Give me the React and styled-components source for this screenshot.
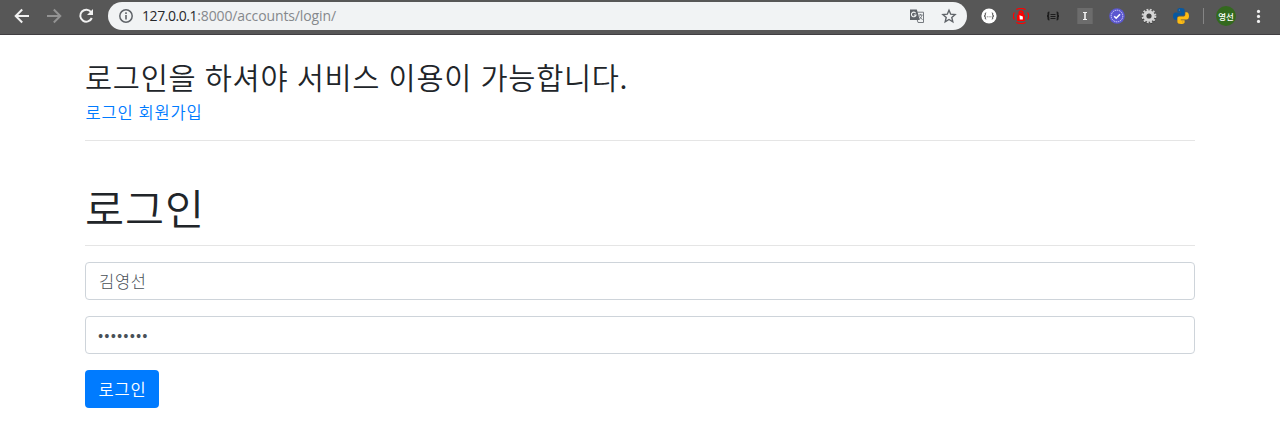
import React from 'react';
import styled, { createGlobalStyle } from 'styled-components';

const GlobalStyle = createGlobalStyle`
  *, *::before, *::after { box-sizing: border-box; }
  body {
    margin: 0;
    background: #fff;
    color: #212529;
    font-family: "Noto Sans CJK KR", sans-serif;
    font-weight: 350;
    font-size: 16.5px;
    line-height: 24px;
    overflow: hidden;
  }
`;

const Toolbar = styled.header`
  display: flex;
  align-items: center;
  height: 35px;
  padding: 0 9px 3px 12px;
  background: #575757;
  border-bottom: 1px solid #403e41;
`;

const NavButtons = styled.nav`
  display: flex;
  gap: 12px;
  margin-right: 12px;
`;

const Icon = styled.svg`
  display: block;
  flex: none;
  width: ${(p) => p.$size || 20}px;
  height: ${(p) => p.$size || 20}px;
`;

const AddressBar = styled.div`
  display: flex;
  align-items: center;
  width: 859px;
  height: 28px;
  padding: 0 10px;
  border-radius: 14px;
  background: #f1f3f4;
`;

const Url = styled.span`
  flex: 1;
  margin-left: 8px;
  font: 400 14px/20px "Open Sans", sans-serif;
  letter-spacing: -0.12px;
  color: #85888c;
`;

const Host = styled.span`
  color: #26282b;
  letter-spacing: -0.43px;
`;

const BarActions = styled.div`
  display: flex;
  gap: 16px;
`;

const Extensions = styled.div`
  display: flex;
  align-items: center;
  gap: 16px;
  margin-left: 14px;
`;

const Separator = styled.span`
  width: 1px;
  height: 16px;
  margin-left: 14px;
  background: #858585;
`;

const Avatar = styled.span`
  display: flex;
  align-items: center;
  justify-content: center;
  width: 20px;
  height: 20px;
  margin: 0 14px 0 12px;
  border-radius: 50%;
  background: #33691e;
  color: #fff;
  font-size: 8.5px;
  font-weight: 500;
  line-height: 10px;
`;

const Container = styled.main`
  width: 1110px;
  margin: 0 auto;
  padding-top: 24px;
`;

const Notice = styled.h3`
  margin: 0 0 7px;
  font-size: 29.5px;
  font-weight: 350;
  line-height: 34px;
  letter-spacing: 0.68px;
  word-spacing: 1.2px;
`;

const Links = styled.div`
  padding-left: 0.5px;
  letter-spacing: 0.8px;
  word-spacing: 0.5px;
`;

const Link = styled.a`
  color: #007bff;
  text-decoration: none;
`;

const Rule = styled.hr`
  height: 1px;
  margin: 16px 0 16px;
  border: 0;
  background: #e5e5e5;
`;

const Title = styled.h1`
  margin: 44px 0 0;
  font-size: 42.5px;
  font-weight: 350;
  line-height: 44px;
  letter-spacing: 0.9px;
`;

const Field = styled.input`
  display: block;
  width: 100%;
  height: 38px;
  margin-bottom: 16px;
  padding: ${(p) => (p.type === 'password' ? '5px 12px 7px' : '6px 13px')};
  border: 1px solid #ced4da;
  border-radius: 4px;
  background: #fff;
  color: #495057;
  font: inherit;
  font-weight: 300;
  letter-spacing: ${(p) => p.$spacing};
  outline: 0;
`;

const Submit = styled.button`
  display: block;
  width: 74px;
  height: 38px;
  padding: 0 0 0 1px;
  border: 0;
  border-radius: 4px;
  background: #007bff;
  color: #fff;
  font: inherit;
  letter-spacing: 0.75px;
`;

const BackIcon = () => (
  <Icon viewBox="0 0 20 20" fill="none" stroke="#f1f1f1" strokeWidth="2">
    <path d="M17 10H4M10.2 3.5 3.7 10l6.5 6.5" />
  </Icon>
);

const ForwardIcon = () => (
  <Icon viewBox="0 0 20 20" fill="none" stroke="#939393" strokeWidth="2">
    <path d="M3 10h13M9.8 3.5l6.5 6.5-6.5 6.5" />
  </Icon>
);

const ReloadIcon = () => (
  <Icon viewBox="0 0 20 20" fill="none" stroke="#f1f1f1" strokeWidth="2">
    <path d="M15.2 6.2A6 6 0 1 0 15.8 12" />
    <path d="M17 3v6h-6z" fill="#f1f1f1" stroke="none" />
  </Icon>
);

const InfoIcon = () => (
  <Icon $size={16} viewBox="0 0 16 16">
    <circle cx="8" cy="8" r="6.2" fill="none" stroke="#5f6368" strokeWidth="1.5" />
    <path d="M7.2 7h1.6v4.5H7.2zM7.2 4.3h1.6v1.6H7.2z" fill="#5f6368" />
  </Icon>
);

const TranslateIcon = () => (
  <Icon $size={16} viewBox="0 0 16 16">
    <path d="M6 4.2h8.5v10.3H9z" fill="#f1f3f4" stroke="#777b80" />
    <path d="M1 1.5h6.8l3 10.5H1z" fill="#5f6368" />
    <path d="M6.7 5.2A2.3 2.3 0 1 0 7 7H4.8" fill="none" stroke="#f1f3f4" strokeWidth="1.1" />
    <path d="M9.5 7h4M11.5 6v1M13 7c-.4 2-1.5 3-2.5 4M10.5 8.5l3 3.3" fill="none" stroke="#777b80" />
  </Icon>
);

const StarIcon = () => (
  <Icon $size={16} viewBox="0 0 16 16" fill="none" stroke="#5f6368" strokeWidth="1.4">
    <path d="M8 2.2l1.7 4 4.4.4-3.3 2.9 1 4.3L8 11.5l-3.800 2.300 1-4.300-3.300-2.900 4.400-.4z" />
  </Icon>
);

const BracesBadgeIcon = () => (
  <Icon $size={16} viewBox="0 0 16 16">
    <circle cx="8" cy="8" r="7.6" fill="#fff" />
    <path d="M5.2 4.8c-1.3 0-.8 1.2-.9 2.2 0 .6-.4 1-1 1 .6 0 1 .4 1 1 .1 1-.4 2.2.9 2.2M10.8 4.8c1.3 0 .8 1.2.9 2.2 0 .6.4 1 1 1-.6 0-1 .4-1 1-.1 1 .4 2.2-.9 2.2" fill="none" stroke="#333" />
    <path d="M5.8 8.8h1M7.6 8.8h1M9.4 8.8h1" stroke="#777" />
  </Icon>
);

const AlarmIcon = () => (
  <Icon $size={16} viewBox="0 0 16 16">
    <path d="M5.4 4.8a2.6 2.6 0 0 1 5.2 0v2h1.2V13H4V6.8h1.4z" fill="#f00" />
    <path d="M7.3 5V4.3q.7-1 1.4 0V5z" fill="#575757" />
    <path d="M6.5 7.2 9.8 8.6v2.8H6.8z" fill="#fff" />
    <path d="M3.3 1.5Q8-.7 12.7 1.5M3.3 14.5q4.7 2.2 9.4 0M1.5 4.5Q-.8 8 1.5 11.5M14.5 4.5q2.3 3.5 0 7" fill="none" stroke="#f00" strokeWidth="1.2" />
  </Icon>
);

const BracesIcon = () => (
  <Icon $size={16} viewBox="0 0 16 16" fill="none" stroke="#1d1d1d">
    <path strokeWidth="1.8" d="M4.4 4.4c-1.5 0-1 1.2-1 2.3 0 .8-.4 1.3-1.400 1.300 1 0 1.400.5 1.400 1.300 0 1.100-.5 2.300 1 2.300M11.600 4.400c1.500 0 1 1.200 1 2.300 0 .8.4 1.300 1.400 1.300-1 0-1.400.5-1.400 1.300 0 1.100.5 2.300-1 2.300" />
    <path d="M5.5 6.500h5M5.5 8.500h5M5.5 10.500h5" />
  </Icon>
);

const SerifIcon = () => (
  <Icon $size={16} viewBox="0 0 16 16">
    <path d="M.3 0h15.4v16H.3z" fill="#6c6c6c" />
    <path d="M6 4h4v1H8.8v6H10v1H6v-1h1.2V5H6z" fill="#f2f2f2" />
  </Icon>
);

const CheckIcon = () => (
  <Icon $size={16} viewBox="0 0 16 16" fill="none">
    <circle cx="8" cy="8" r="7.8" fill="#5b57d0" />
    <circle cx="8" cy="8" r="5.8" stroke="#d5d3f6" strokeWidth="1" strokeDasharray="1.5 .7" />
    <path d="M5.2 8.2l2 2 3.8-4" stroke="#fff" strokeWidth="1.6" />
  </Icon>
);

const GearIcon = () => (
  <Icon $size={16} viewBox="0 0 16 16" fill="none">
    <circle cx="8" cy="8.8" r="6.3" stroke="#333" strokeWidth="2.2" strokeDasharray="1.9 1.4" />
    <circle cx="8" cy="8" r="6.3" stroke="#cfcfcf" strokeWidth="2.2" strokeDasharray="1.9 1.4" />
    <circle cx="8" cy="8" r="4.2" stroke="#d6d6d6" strokeWidth="3.2" />
    <circle cx="8" cy="8" r="2.3" fill="#454545" />
  </Icon>
);

const PythonIcon = () => (
  <Icon $size={16} viewBox="0 0 16 16">
    <path d="M7.9 0C4.5 0 4.4 1.2 4.4 2v1.8h3.8v.6H2.4C1 4.4 0 5.6 0 8s1 3.8 2.4 3.8H4V9.6c0-1.3 1-2.2 2.2-2.2h3.6c1 0 1.8-.8 1.8-1.8V2c0-1.2-1.2-2-3.7-2z" fill="#0758a0" />
    <path d="M8.1 16c3.4 0 3.5-1.2 3.5-2v-1.8H7.8v-.6h5.8c1.4 0 2.4-1.2 2.4-3.6s-1-3.8-2.4-3.8h-1.3v2.2c0 1.3-1 2.2-2.2 2.2H6.2c-1 0-1.8.8-1.8 1.8V14c0 1.2 1.2 2 3.7 2z" fill="#fdbb12" />
    <circle cx="6.3" cy="2.1" r=".5" fill="#7fa8cc" />
    <circle cx="9.7" cy="13.9" r=".6" fill="#c89b2c" />
  </Icon>
);

const MenuIcon = () => (
  <Icon $size={16} viewBox="0 0 16 16" fill="#f1f1f1">
    <circle cx="8.5" cy="3.4" r="1.6" />
    <circle cx="8.5" cy="8.4" r="1.6" />
    <circle cx="8.5" cy="13.4" r="1.6" />
  </Icon>
);

export default function App() {
  return (
    <>
      <GlobalStyle />
      <Toolbar>
        <NavButtons>
          <BackIcon />
          <ForwardIcon />
          <ReloadIcon />
        </NavButtons>
        <AddressBar>
          <InfoIcon />
          <Url><Host>127.0.0.1</Host>:8000/accounts/login/</Url>
          <BarActions>
            <TranslateIcon />
            <StarIcon />
          </BarActions>
        </AddressBar>
        <Extensions>
          <BracesBadgeIcon />
          <AlarmIcon />
          <BracesIcon />
          <SerifIcon />
          <CheckIcon />
          <GearIcon />
          <PythonIcon />
        </Extensions>
        <Separator />
        <Avatar>영선</Avatar>
        <MenuIcon />
      </Toolbar>
      <Container>
        <Notice>로그인을 하셔야 서비스 이용이 가능합니다.</Notice>
        <Links>
          <Link href="#login">로그인</Link> <Link href="#signup">회원가입</Link>
        </Links>
        <Rule />
        <Title>로그인</Title>
        <Rule />
        <form>
          <Field type="text" defaultValue="김영선" $spacing="0.75px" />
          <Field type="password" defaultValue="password" $spacing="1.1px" />
          <Submit type="button">로그인</Submit>
        </form>
      </Container>
    </>
  );
}
